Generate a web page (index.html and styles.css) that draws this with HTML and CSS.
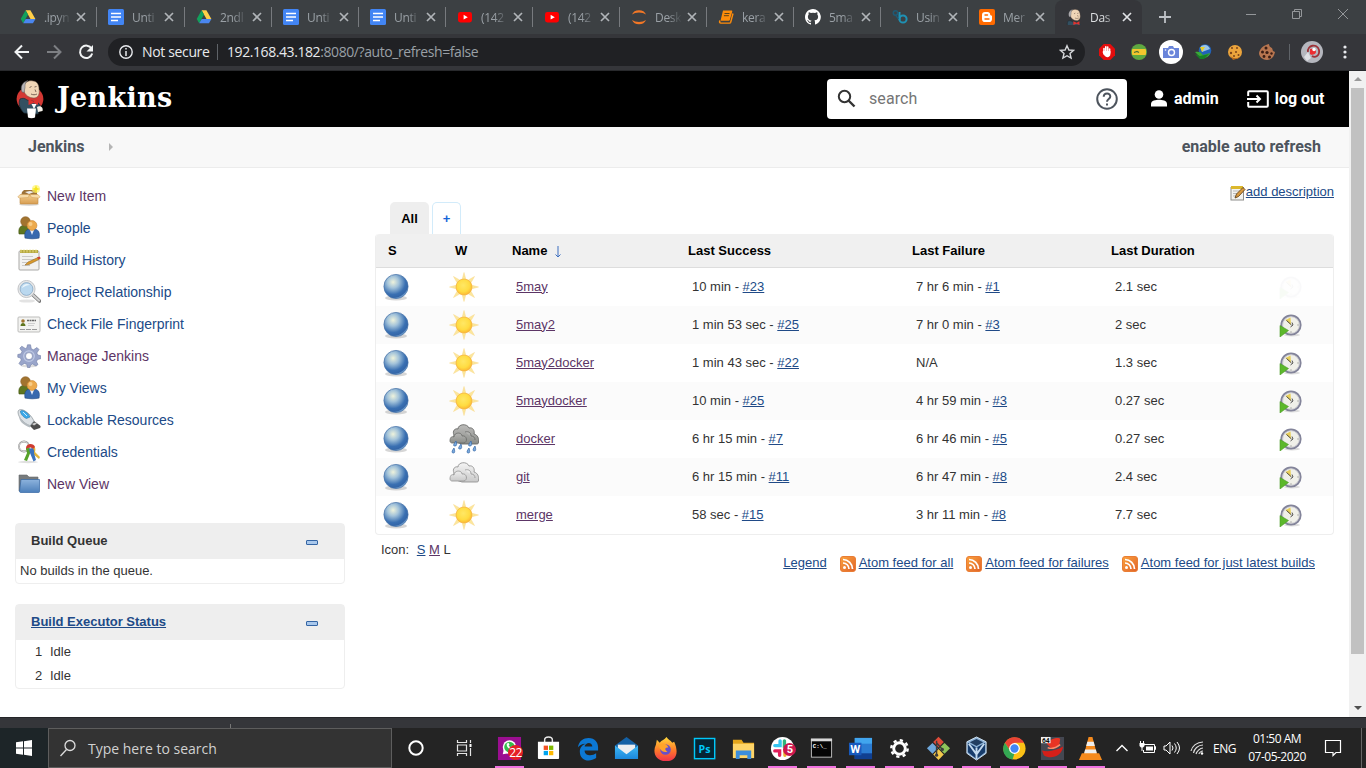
FILE: index.html
```html
<!DOCTYPE html>
<html lang="en">
<head>
<meta charset="utf-8">
<title>Dashboard [Jenkins]</title>
<link rel="stylesheet" href="styles.css">
</head>
<body>
<svg class="sprite" width="0" height="0" aria-hidden="true">
  <defs>
    <radialGradient id="ballFill" cx=".38" cy=".32" r=".68"><stop offset="0" stop-color="#eff3dc"/><stop offset=".35" stop-color="#a3c3da"/><stop offset=".75" stop-color="#3a70b2"/><stop offset=".93" stop-color="#3466a8"/><stop offset="1" stop-color="#6d9bcb"/></radialGradient>
    <radialGradient id="sunFill" cx=".45" cy=".4" r=".65"><stop offset="0" stop-color="#ffe765"/><stop offset=".6" stop-color="#ffdc42"/><stop offset="1" stop-color="#fbb02f"/></radialGradient>
    <linearGradient id="darkCloud" x2="0" y2="1"><stop offset="0" stop-color="#bcbcba"/><stop offset="1" stop-color="#8b8d89"/></linearGradient>
    <linearGradient id="lightCloud" x2="0" y2="1"><stop offset="0" stop-color="#f4f4f4"/><stop offset="1" stop-color="#c9c9c9"/></linearGradient>
    <linearGradient id="rssFill" x2="1" y2="1"><stop offset="0" stop-color="#fba33c"/><stop offset="1" stop-color="#e0622a"/></linearGradient>
    <linearGradient id="folderFill" x2="0" y2="1"><stop offset="0" stop-color="#8db3dd"/><stop offset="1" stop-color="#4c7fba"/></linearGradient>
    <linearGradient id="boxFill" x2="0" y2="1"><stop offset="0" stop-color="#f3cd8c"/><stop offset="1" stop-color="#d79d52"/></linearGradient>
    <linearGradient id="mailFill" x2="0" y2="1"><stop offset="0" stop-color="#3fb8f4"/><stop offset="1" stop-color="#1b87dc"/></linearGradient>
    <linearGradient id="foxFill" x2="0" y2="1"><stop offset="0" stop-color="#ffd93b"/><stop offset=".55" stop-color="#ff7a2a"/><stop offset="1" stop-color="#f0324c"/></linearGradient>
  </defs>
  <symbol id="close" viewBox="0 0 10 10"><path d="M1 1l8 8M9 1l-8 8" stroke="currentColor" stroke-width="1.7" fill="none"/></symbol>
  <symbol id="drive" viewBox="0 0 16 16"><path d="M5.6 1.2h4.8l5 8.8h-4.9z" fill="#ffcf48"/><path d="M5.6 1.2L8 5.5 3.2 14.3.7 10z" fill="#12a05c"/><path d="M5.7 10h9.8l-2.6 4.3H3.2z" fill="#4a86ef"/></symbol>
  <symbol id="docs" viewBox="0 0 16 16"><rect width="16" height="16" rx="1.5" fill="#4285f4"/><path d="M3 4.5h10M3 8h10M3 11.5h7" stroke="#fff" stroke-width="1.7"/></symbol>
  <symbol id="youtube" viewBox="0 0 16 16"><rect x="1" y="3" width="14" height="10.4" rx="2.4" fill="#f00"/><path d="M6.6 5.8l4.2 2.4-4.2 2.4z" fill="#fff"/></symbol>
  <symbol id="jupyter" viewBox="0 0 16 16"><path d="M1 5.4a7.4 6.3 0 0 1 14 0 9 5.3 0 0 0-14 0zM1 11a7.4 6.3 0 0 0 14 0 9 5.3 0 0 1-14 0z" fill="#f37726"/></symbol>
  <symbol id="book" viewBox="0 0 16 16"><path d="M5 1.500h8.200c1 0 1.300.5 1 1.300l-2.300 8c-.2.7-.6 1-1.300 1H2.500z" fill="#ff8c0a"/><path d="M15 4.500l-2.300 8.700c-.2.6-.5.900-1.200.9H3c-1.500 0-2-1.500-.8-2.500" fill="none" stroke="#ff8c0a" stroke-width="1.400"/><path d="M6.500 4.500h5M5.900 6.700h5" stroke="#5e4319"/></symbol>
  <symbol id="github" viewBox="0 0 16 16"><path fill="#fff" d="M8 0C3.600 0 0 3.600 0 8c0 3.500 2.300 6.500 5.500 7.600.4.100.5-.2.5-.4v-1.400c-2.200.5-2.700-1-2.700-1-.4-.9-.9-1.200-.9-1.200-.7-.5.1-.5.1-.5.8.1 1.200.8 1.200.8.7 1.300 1.900.9 2.300.7.1-.5.3-.9.5-1.100-1.800-.2-3.600-.9-3.600-4 0-.9.3-1.600.8-2.100-.1-.2-.4-1 .1-2.100 0 0 .7-.2 2.200.8a7.500 7.500 0 0 1 4 0c1.500-1 2.200-.8 2.200-.8.4 1.100.2 1.900.1 2.100.5.6.8 1.300.8 2.100 0 3.100-1.900 3.700-3.700 3.900.3.3.6.8.6 1.500v2.200c0 .2.1.5.6.4A8 8 0 0 0 8 0z"/></symbol>
  <symbol id="biglobe" viewBox="0 0 16 16"><g fill="none" stroke="#1e91b4" stroke-width="2"><circle cx="11" cy="10" r="3.600"/><path d="M7.500 11V3"/></g><circle cx="3.500" cy="4" r="2.200" fill="none" stroke="#1f5a75" stroke-width="1.500"/><path d="M3.500 6l3 4" stroke="#1f5a75" stroke-width="1.300"/></symbol>
  <symbol id="blogger" viewBox="0 0 16 16"><rect width="16" height="16" rx="2" fill="#ff6a00"/><path d="M6 3h2.600c1.500 0 2.600 1.200 2.600 2.600 0 .8.4.9 1.100.9.5 0 .7.3.7.8v2.600A3.100 3.100 0 0 1 9.900 13H6.100A3.100 3.100 0 0 1 3 9.900V6a3 3 0 0 1 3-3z" fill="#fff"/><path d="M6 6h2.500M6 10h4" stroke="#ff6a00" stroke-width="1.400" stroke-linecap="round"/></symbol>
  <symbol id="bust" viewBox="0 0 30 40">
    <path d="M5 20c2-1 5-1 7 1l9 2c3 1 5 3 4 6l-2 6-14-1C5 30 3 25 5 20z" fill="#335061" stroke="#1b2b34" stroke-width=".7"/>
    <path d="M8 9C9 3 14 1 18 2c4 0 6 4 6 8 1 5-1 9-5 9-5 0-9-3-10-7z" fill="#f0d6b7" stroke="#6b5648" stroke-width=".5"/>
    <path d="M7 13C5 8 7 3 13 1.500c-3 2-3 4-3 7l-1 5z" fill="#b4b2b6" stroke="#555" stroke-width=".5"/>
    <path d="M14.500 8.500l2-1m3 .5l2-.5m-1.500 3l1 2.500m-5 2c2 1 4 1 6 0" stroke="#5d483d" stroke-width=".8" fill="none"/>
    <path d="M13.500 20l5 2.500 4.500-2.500v6l-4.500-2-5 2z" fill="#e0332f"/>
  </symbol>
  <symbol id="butler" viewBox="0 0 30 40">
    <ellipse cx="15" cy="20" rx="13.400" ry="12.300" fill="#d33833"/>
    <use href="#bust" width="30" height="40"/>
    <path d="M16.500 25l2.500 5 2.500-5z" fill="#fff"/><path d="M12 29.500h9l-1 9c-2 1-5 1-7 0z" fill="#fff"/><path d="M22 28c3-2 6.500 0 5.500 4l-4.500 1z" fill="#f5f1e8"/>
  </symbol>
  <symbol id="person" viewBox="0 0 18 17"><circle cx="9" cy="4.500" r="4.300" fill="#fff"/><path d="M1 16.500v-2.600C1 10.500 6 9.800 9 9.800s8 .7 8 4.100v2.600z" fill="#fff"/></symbol>
  <symbol id="logout" viewBox="0 0 22 18"><path d="M1.200 6V2.200c0-.6.4-1 1-1h17.600c.6 0 1 .4 1 1v13.600c0 .6-.4 1-1 1H2.200c-.6 0-1-.4-1-1V12M0 9h13M9.500 5.500L13 9l-3.500 3.500" fill="none" stroke="#fff" stroke-width="2"/></symbol>
  <symbol id="newitem" viewBox="0 0 24 24"><ellipse cx="12" cy="20.500" rx="10" ry="1.500" fill="#ddd"/><path d="M5 8l2-2h11l2 2v4H4z" fill="#9c7238"/><path d="M8 8l5-1 4 1-5 2z" fill="#eee"/><path d="M3 11h18v8c0 1-.5 1-1 1H4c-1 0-1-.5-1-1z" fill="url(#boxFill)" stroke="#c08c45" stroke-width=".6"/><path d="M3 10.500L.8 13l1.500 1 9-.5 1-3zM21 10.500l2.200 2.500-1.500 1-7-.5-2-3z" fill="#f7dcaa" stroke="#cf9d57" stroke-width=".5"/><circle cx="19" cy="5" r="4" fill="#fff46b" opacity=".7"/><path d="M19 1l1 3 3 1-3 1-1 3-1-3-3-1 3-1z" fill="#f6e51c"/></symbol>
  <symbol id="people" viewBox="0 0 24 24"><ellipse cx="15" cy="22" rx="8" ry="1.200" fill="#ddd"/><path d="M2 18c-1-7 2-8 5-9h3c4 1 4 3 4 9z" fill="#5f7620" stroke="#415410" stroke-width=".6"/><circle cx="8.500" cy="5.500" r="4.800" fill="#a2742f" stroke="#8a602a" stroke-width=".6"/><path d="M8 22c-1-6 1-8 4-9h6c4 1 5 4 4 9-4 1-9 1-14 0z" fill="#3869ae" stroke="#204a87" stroke-width=".6"/><path d="M13 14l2 5 2-5z" fill="#e7eefb"/><circle cx="15" cy="9.500" r="4.900" fill="#edaa4d" stroke="#c98432" stroke-width=".6"/><circle cx="13.500" cy="8" r="2" fill="#f8cc87"/></symbol>
  <symbol id="notepad" viewBox="0 0 24 24"><rect x="2" y="3" width="20" height="19" rx="1" fill="#f2f2f0" stroke="#aaa9a7"/><rect x="3" y="2" width="18" height="3" fill="#b5a83f"/><path d="M4 1.500v3M7 1.500v3M10 1.500v3M13 1.500v3M16 1.500v3M19 1.500v3" stroke="#e6d983"/><path d="M5 8.500h11M5 11.500h12M5 14.500h5M5 17.500h8" stroke="#c9c9c7"/><path d="M8 17l3-3 10-4.500 1 2-10 5z" fill="#d99a2b" stroke="#83591a" stroke-width=".5"/><path d="M20 9.500l2.500-1 1.300 1.800-2 1.200z" fill="#cf4033"/></symbol>
  <symbol id="pencilnote" viewBox="0 0 16 16"><rect x="1" y="2.500" width="12.500" height="12.500" fill="#f3f3f0" stroke="#8e8e8b"/><path d="M1 1h12v3H1z" fill="#dcb82c"/><path d="M3 6h7M3 8.500h4M3 11h3" stroke="#bbb"/><path d="M5 13l1.500-4L13 2.500l2 2-6.500 7z" fill="#d9993e" stroke="#65451c" stroke-width=".9"/></symbol>
  <symbol id="magnify" viewBox="0 0 24 24"><ellipse cx="10" cy="21" rx="8" ry="1.600" fill="#e3e3e3"/><path d="M15 14l7.500 7" stroke="#777" stroke-width="3.600" stroke-linecap="round"/><path d="M15 14l7 6.500" stroke="#d0d0d0" stroke-width="2.200" stroke-linecap="round"/><circle cx="9.500" cy="9" r="7.500" fill="#bad8ef" stroke="#e8e8e8" stroke-width="2.200"/><circle cx="9.500" cy="9" r="8.600" fill="none" stroke="#a4a7ad" stroke-width=".6"/><circle cx="9.500" cy="9" r="6.400" fill="none" stroke="#7fa1be" stroke-width=".7"/><path d="M5 8c1-4 5-5 8-3-3 0-5 1-8 3z" fill="#eaf5fc"/></symbol>
  <symbol id="idcard" viewBox="0 0 24 24"><rect x="1" y="5" width="22" height="15" rx="1" fill="#f3f3f1" stroke="#bdbdbb"/><circle cx="6" cy="9" r="1.800" fill="#a2742f"/><path d="M3.500 14c0-4 5-4 5 0z" fill="#5f7620"/><path d="M10 8.500h9" stroke="#666" stroke-width="1.400" stroke-dasharray="2 .5"/><path d="M11 11.500h7M11 13.500h6" stroke="#d0d0d0"/><path d="M3 17.500h18" stroke="#999" stroke-dasharray="5 1"/></symbol>
  <symbol id="gear" viewBox="0 0 24 24"><ellipse cx="12" cy="22" rx="8" ry="1.300" fill="#ddd"/><path fill-rule="evenodd" d="M10.500.8h3l.8 4 2.200 1 3.500-2.300 2 2-2.200 3.500 1 2 3 .7v3l-3.300.8-1 2.300L21 20.500 19 22l-3.500-2-2 1-.5 2.500h-2.500l-.8-3.200-2.300-.8L4 21.500 2 19.500l2.300-3.500-.8-2-2.700-.8v-2.700L4 9.800l1-2.300L2.800 4.200l2-2L8.300 4.500l1.500-.8zM12 8.600a3.500 3.500 0 1 0 0 7 3.500 3.500 0 0 0 0-7z" fill="#99a5ca" stroke="#717da6" stroke-width=".6"/><circle cx="12" cy="12.100" r="5.300" fill="none" stroke="#bfc9e4" stroke-width="1.200"/></symbol>
  <symbol id="usb" viewBox="0 0 24 24"><path d="M12 17l5-4 6 4.500c1 .8.500 1.800 0 2.500l-6 2z" fill="#4d4d4d"/><path d="M15 16l3-1.500 2 1-3 2z" fill="#ccc"/><path d="M1 4c0-3 4-3 7-1 4 2 7 6 9 10l-4 5C8 16 1 10 1 4z" fill="#dce1e5" stroke="#8b9499" stroke-width=".7"/><path d="M3.500 3c2-2 8 2 9.500 6l-3.500 1.500C6.500 9.500 3 5.500 3.500 3z" fill="#3ba8e8" stroke="#156da5" stroke-width=".5"/><path d="M6 4l4 4" stroke="#c5eaff"/><path d="M2 8c3 5 7 8 11 9v2.500C6 17 2 13 2 8z" fill="#b4bbc0"/></symbol>
  <symbol id="keys" viewBox="0 0 24 24"><ellipse cx="11" cy="22" rx="10" ry="1.200" fill="#e0e0e0"/><circle cx="7" cy="6.500" r="5" fill="none" stroke="#8d8d8d" stroke-width="1.800"/><circle cx="7" cy="6.500" r="5" fill="none" stroke="#ededed" stroke-width=".8"/><path d="M14 6c4-1 5 3 4 6l5 5-1 2-6-5z" fill="#e2b53b"/><path d="M9 8c0-5 8-5 9-1l-2 2c-3-3-5-1-7 1z" fill="#cf3c31"/><path d="M9 9c2-2 5-1 5 2l-4 10-3-1 3-7z" fill="#56a129"/><path d="M12 9c3-2 6 0 5 4l2 7-2.500 1.500L13 13z" fill="#3c73bd"/></symbol>
  <symbol id="folder" viewBox="0 0 24 24"><path d="M2 3h8l2 2h9v14H2z" fill="#777b7d" stroke="#66696b" stroke-width=".6"/><path d="M4 7.500h18.500v12c0 .6-.4 1-1 1H4c-1 0-1.500-.5-1.500-1z" fill="url(#folderFill)" stroke="#3465a4" stroke-width=".7"/></symbol>
  <symbol id="ball" viewBox="0 0 30 30"><ellipse cx="15" cy="26" rx="11" ry="2.600" fill="#777" opacity=".3"/><circle cx="15" cy="14.500" r="12.100" fill="url(#ballFill)" stroke="#4470a6" stroke-width=".7"/></symbol>
  <symbol id="sun" viewBox="0 0 30 30"><path d="M15 .5l2 7.500h-4zM15 29.500l-2-7.500h4zM.5 15L8 13v4zM29.500 15L22 17v-4zM4.500 4.500l7 4-3 3zM25.500 25.500l-7-4 3-3zM25.500 4.500l-4 7-3-3zM4.500 25.500l4-7 3 3z" fill="#fce79c" stroke="#f8d98a" stroke-width=".5"/><circle cx="15" cy="15" r="8" fill="url(#sunFill)" stroke="#f4b041" stroke-width=".7"/></symbol>
  <symbol id="cloud" viewBox="0 0 30 30"><path d="M5 12C3 8 6 5 9 6c0-5 9-6 11-1 4-1 6 3 5 6 4 1 5 5 4.500 8 0 2-1 2-2 2H13l-9-3z" stroke-width=".9"/><path d="M1 18c0-4 2-5 4-4 0-5 8-5 8-1 5-1 6 6 2 7H3c-1 0-2-1-2-2zM16 9c4-1 6 1 6 4 3 0 4 2 4 4" stroke-width=".8"/></symbol>
  <symbol id="rain" viewBox="0 0 30 30"><g fill="url(#darkCloud)" stroke="#686967"><use href="#cloud" x="0" y="-1" width="30" height="30"/></g><g fill="#78aade" stroke="#3767a6" stroke-width=".7"><path d="M7 17c-3 4-3 5-1 5s2-2 1-5zM12 20c-3 4-3 5-1 5s2-2 1-5zM22 17c-3 4-3 5-1 5s2-2 1-5zM5 24c-3 4-2 5-.5 5S6 27 5 24zM20 24c-3 4-2 5-.5 5s1.500-2 .5-5zM26 22c-3 4-2 5-.5 5s1.500-2 .5-5z"/></g></symbol>
  <symbol id="overcast" viewBox="0 0 30 30"><g fill="url(#lightCloud)" stroke="#929292"><use href="#cloud" x="0" y="-1" width="30" height="30"/></g></symbol>
  <symbol id="clock" viewBox="0 0 24 24"><ellipse cx="14" cy="22" rx="8" ry="1.500" fill="#ddd"/><circle cx="13" cy="12" r="9.600" fill="#f0f0e9" stroke="#83849a" stroke-width="2"/><circle cx="13" cy="12" r="8.300" fill="none" stroke="#c9c9d0" stroke-width=".8"/><path d="M13 12L7.500 7l5-2.500z" fill="#e8cf59"/><path d="M8.500 7.500l5 4.500M14 9.500l1 2.500-2.500 2" fill="none" stroke="#444" stroke-width=".9"/><path d="M13 18.500v1M19.500 12h1" stroke="#777"/><path d="M2 12.500l8.500 5L2 24z" fill="#5cb82b" stroke="#4c9a26" stroke-width=".6"/></symbol>
  <symbol id="rss" viewBox="0 0 16 16"><rect x=".5" y=".5" width="15" height="15" rx="2.500" fill="url(#rssFill)" stroke="#e97d35"/><circle cx="4.500" cy="11.500" r="1.500" fill="#fff"/><path d="M3 7a6 6 0 0 1 6 6M3 3.500A9.500 9.500 0 0 1 12.500 13" fill="none" stroke="#fff" stroke-width="1.700"/></symbol>
</svg>

<div class="tabstrip">
  <div class="tab wide"><svg class="favicon"><use href="#drive"/></svg><span class="tab-title">.ipyn</span><svg class="tab-close"><use href="#close"/></svg></div>
  <div class="tab wide"><svg class="favicon"><use href="#docs"/></svg><span class="tab-title">Unti</span><svg class="tab-close"><use href="#close"/></svg></div>
  <div class="tab"><svg class="favicon"><use href="#drive"/></svg><span class="tab-title">2ndl</span><svg class="tab-close"><use href="#close"/></svg></div>
  <div class="tab"><svg class="favicon"><use href="#docs"/></svg><span class="tab-title">Unti</span><svg class="tab-close"><use href="#close"/></svg></div>
  <div class="tab"><svg class="favicon"><use href="#docs"/></svg><span class="tab-title">Unti</span><svg class="tab-close"><use href="#close"/></svg></div>
  <div class="tab"><svg class="favicon"><use href="#youtube"/></svg><span class="tab-title">(142</span><svg class="tab-close"><use href="#close"/></svg></div>
  <div class="tab"><svg class="favicon"><use href="#youtube"/></svg><span class="tab-title">(142</span><svg class="tab-close"><use href="#close"/></svg></div>
  <div class="tab"><svg class="favicon"><use href="#jupyter"/></svg><span class="tab-title">Desk</span><svg class="tab-close"><use href="#close"/></svg></div>
  <div class="tab"><svg class="favicon"><use href="#book"/></svg><span class="tab-title">kera</span><svg class="tab-close"><use href="#close"/></svg></div>
  <div class="tab"><svg class="favicon"><use href="#github"/></svg><span class="tab-title">5ma</span><svg class="tab-close"><use href="#close"/></svg></div>
  <div class="tab"><svg class="favicon"><use href="#biglobe"/></svg><span class="tab-title">Usin</span><svg class="tab-close"><use href="#close"/></svg></div>
  <div class="tab before-active"><svg class="favicon"><use href="#blogger"/></svg><span class="tab-title">Mer</span><svg class="tab-close"><use href="#close"/></svg></div>
  <div class="tab active"><svg class="favicon" viewBox="2 1 25 25"><use href="#bust" width="30" height="40"/></svg><span class="tab-title">Das</span><svg class="tab-close"><use href="#close"/></svg></div>
  <svg class="new-tab" viewBox="0 0 12 12"><path d="M6 0v12M0 6h12" stroke="#bdc1c6" stroke-width="1.800"/></svg>
  <div class="window-buttons">
    <svg width="12" height="12"><path d="M1 6.500h10" stroke="#94979a"/></svg>
    <svg width="12" height="12"><path d="M1.500 3.500h7v7h-7zM3.500 3.500v-2h7v7h-2" stroke="#94979a" fill="none"/></svg>
    <svg width="12" height="12"><path d="M1 1l10 10M11 1L1 11" stroke="#94979a" fill="none"/></svg>
  </div>
</div>

<div class="toolbar">
  <svg class="nav" viewBox="0 0 16 16"><path d="M15 8H2M8 1.500L1.500 8 8 14.500" fill="none" stroke="#f1f3f4" stroke-width="2"/></svg>
  <svg class="nav" viewBox="0 0 16 16"><path d="M1 8h13M8 1.500L14.500 8 8 14.500" fill="none" stroke="#7d7f83" stroke-width="2"/></svg>
  <svg class="nav" viewBox="0 0 16 16"><path d="M13.600 4.700A6.200 6.200 0 1 0 14.200 9.500" fill="none" stroke="#f1f3f4" stroke-width="2"/><path d="M15 1v6.500H8.500z" fill="#f1f3f4"/></svg>
  <div class="omnibox">
    <svg class="info" viewBox="0 0 14 14"><circle cx="7" cy="7" r="6.200" fill="none" stroke="#e8eaed" stroke-width="1.400"/><path d="M7 6v5M7 3v1.600" stroke="#e8eaed" stroke-width="1.500"/></svg>
    <span class="not-secure">Not secure</span><i class="divider"></i>
    <span class="url"><b>192.168.43.182</b>:8080/?auto_refresh=false</span>
    <svg class="star" viewBox="0 0 16 16"><path d="M8 1.700l1.900 4.300 4.700.4-3.600 3.100 1.100 4.600L8 11.700l-4.100 2.400L5 9.500 1.400 6.400 6.100 6z" fill="none" stroke="#d5d7da" stroke-width="1.400"/></svg>
  </div>
  <div class="extensions">
    <svg viewBox="0 0 24 24"><path d="M8.700 4h6.600L20 8.700v6.600L15.300 20H8.700L4 15.300V8.700z" fill="#e40d0d"/><path d="M9 14V8.500M10.800 13V6.800M12.700 13V7M14.600 13V9" stroke="#fff" stroke-width="1.600" stroke-linecap="round"/><path d="M8.200 11h7.200v3c0 4-5 4-6.200 1L7.500 12z" fill="#fff"/></svg>
    <svg viewBox="0 0 24 24"><circle cx="12" cy="12" r="8" fill="#5fa840"/><rect x="5" y="9" width="14" height="6" rx="1" fill="#f3c62d"/><path d="M7 12.500l3-1 2 1" stroke="#4d7136" stroke-width="1.300" fill="none"/></svg>
    <svg viewBox="0 0 24 24"><circle cx="12" cy="12" r="12" fill="#fff"/><path d="M4 8h5l1-2h4l1 2h5v10H4z" fill="#6a85da"/><circle cx="12.500" cy="12.500" r="3" fill="none" stroke="#fff" stroke-width="1.400"/><circle cx="6.500" cy="10" r=".8" fill="#fff"/></svg>
    <svg viewBox="0 0 24 24"><circle cx="14" cy="10.500" r="6.300" fill="#2262b8"/><path d="M10 6c5-2 7-1 9 3l-8 3z" fill="#9bc5e7"/><path d="M4 12c4-1 6 0 8 3l7-2c-1 5-8 7-11 3z" fill="#39a935"/><path d="M9 7l5 0-3 5z" fill="#e6cd29"/><path d="M4 14l5 2 9-2-5 5H9z" fill="#178025"/></svg>
    <svg viewBox="0 0 24 24"><circle cx="12" cy="12" r="7" fill="#eca43c"/><path d="M6 14c3 5 9 6 12 1l-2 3-6 2z" fill="#b76719"/><g fill="#7d451a"><circle cx="9" cy="8" r="1"/><circle cx="14" cy="8" r="1"/><circle cx="8" cy="13" r="1.200"/><circle cx="13" cy="12" r="1"/><circle cx="15.500" cy="15" r="1"/><circle cx="11" cy="16" r="1"/></g></svg>
    <svg viewBox="0 0 24 24"><path d="M14 4c0 2 1 3 3 4l1 3 2 1c-1 5-4 8-8 8s-8-3-8-7c1-5 5-8 10-9z" fill="#b87650"/><g fill="#3b1e15"><circle cx="11" cy="8" r="1.500"/><circle cx="7.500" cy="12" r="1.500"/><circle cx="12" cy="12.500" r="1.600"/><circle cx="9" cy="16.500" r="1.400"/><circle cx="14.500" cy="17" r="1.500"/><circle cx="16.500" cy="13.500" r="1.200"/></g></svg>
  </div>
  <i class="divider"></i>
  <svg class="avatar" viewBox="0 0 22 22"><circle cx="11" cy="11" r="11" fill="#b5b7be"/><path d="M7 11c-1-7 9-9 11-2 1 6-4 8-7 6" fill="none" stroke="#9e3238" stroke-width="1.800"/><path d="M9 8c4-1 6 1 6 3s-4 4-6 2z" fill="#ed2d31"/><circle cx="13" cy="8.500" r="1.700" fill="#fff"/><path d="M3 16l4-5 3 6-4 3z" fill="#dee0e4"/></svg>
  <svg class="kebab" viewBox="0 0 4 16"><g fill="#e8eaed"><circle cx="2" cy="3" r="1.600"/><circle cx="2" cy="8" r="1.600"/><circle cx="2" cy="13" r="1.600"/></g></svg>
</div>

<div class="viewport">
  <div class="page">
    <header class="header">
      <svg class="logo"><use href="#butler"/></svg><span class="brand">Jenkins</span>
      <div class="search">
        <svg width="20" height="20" viewBox="0 0 20 20"><circle cx="7.500" cy="7.500" r="5.700" fill="none" stroke="#333" stroke-width="2"/><path d="M11.500 11.500l6 6" stroke="#333" stroke-width="2.400"/></svg>
        <span>search</span>
        <svg class="help" viewBox="0 0 20 20"><circle cx="10" cy="10" r="8.900" fill="none" stroke="#4d545d" stroke-width="1.800"/><path d="M7 8c0-4 6-4 6-.3C13 10 10 10 10 12.500M10 14v2" fill="none" stroke="#4d545d" stroke-width="1.800"/></svg>
      </div>
      <a class="user"><svg width="18" height="17"><use href="#person"/></svg>admin</a>
      <a class="logout"><svg width="22" height="18"><use href="#logout"/></svg>log out</a>
    </header>
    <nav class="breadcrumbs"><span>Jenkins</span><i></i><a>enable auto refresh</a></nav>
    <div class="content">
      <aside class="sidebar">
        <a class="task visited"><svg><use href="#newitem"/></svg>New Item</a>
        <a class="task"><svg><use href="#people"/></svg>People</a>
        <a class="task"><svg><use href="#notepad"/></svg>Build History</a>
        <a class="task"><svg><use href="#magnify"/></svg>Project Relationship</a>
        <a class="task"><svg><use href="#idcard"/></svg>Check File Fingerprint</a>
        <a class="task visited"><svg><use href="#gear"/></svg>Manage Jenkins</a>
        <a class="task"><svg><use href="#people"/></svg>My Views</a>
        <a class="task"><svg><use href="#usb"/></svg>Lockable Resources</a>
        <a class="task"><svg><use href="#keys"/></svg>Credentials</a>
        <a class="task visited"><svg><use href="#folder"/></svg>New View</a>
        <section class="pane queue"><h2>Build Queue<i class="collapse"></i></h2><p>No builds in the queue.</p></section>
        <section class="pane executors"><h2><a>Build Executor Status</a><i class="collapse"></i></h2><p><span>1</span>Idle</p><p><span>2</span>Idle</p></section>
      </aside>
      <main class="main">
        <div class="describe"><svg><use href="#pencilnote"/></svg><a>add description</a></div>
        <div class="views"><b>All</b><a>+</a></div>
        <div class="jobs">
          <div class="row head"><span>S</span><span>W</span><span>Name<svg class="arrow" viewBox="0 0 6 12"><path d="M3 0v11M.5 8.500L3 11l2.500-2.500" fill="none" stroke="#3d6fc0"/></svg></span><span>Last Success</span><span>Last Failure</span><span>Last Duration</span><span></span></div>
          <div class="row"><svg class="icon"><use href="#ball"/></svg><svg class="icon"><use href="#sun"/></svg><a class="visited">5may</a><span>10 min - <a>#23</a></span><span>7 hr 6 min - <a>#1</a></span><span>2.1 sec</span><svg class="build faded"><use href="#clock"/></svg></div>
          <div class="row"><svg class="icon"><use href="#ball"/></svg><svg class="icon"><use href="#sun"/></svg><a class="visited">5may2</a><span>1 min 53 sec - <a>#25</a></span><span>7 hr 0 min - <a>#3</a></span><span>2 sec</span><svg class="build"><use href="#clock"/></svg></div>
          <div class="row"><svg class="icon"><use href="#ball"/></svg><svg class="icon"><use href="#sun"/></svg><a class="visited">5may2docker</a><span>1 min 43 sec - <a>#22</a></span><span>N/A</span><span>1.3 sec</span><svg class="build"><use href="#clock"/></svg></div>
          <div class="row"><svg class="icon"><use href="#ball"/></svg><svg class="icon"><use href="#sun"/></svg><a class="visited">5maydocker</a><span>10 min - <a>#25</a></span><span>4 hr 59 min - <a>#3</a></span><span>0.27 sec</span><svg class="build"><use href="#clock"/></svg></div>
          <div class="row"><svg class="icon"><use href="#ball"/></svg><svg class="icon"><use href="#rain"/></svg><a class="visited">docker</a><span>6 hr 15 min - <a>#7</a></span><span>6 hr 46 min - <a>#5</a></span><span>0.27 sec</span><svg class="build"><use href="#clock"/></svg></div>
          <div class="row"><svg class="icon"><use href="#ball"/></svg><svg class="icon"><use href="#overcast"/></svg><a class="visited">git</a><span>6 hr 15 min - <a>#11</a></span><span>6 hr 47 min - <a>#8</a></span><span>2.4 sec</span><svg class="build"><use href="#clock"/></svg></div>
          <div class="row"><svg class="icon"><use href="#ball"/></svg><svg class="icon"><use href="#sun"/></svg><a class="visited">merge</a><span>58 sec - <a>#15</a></span><span>3 hr 11 min - <a>#8</a></span><span>7.7 sec</span><svg class="build"><use href="#clock"/></svg></div>
        </div>
        <div class="sizes">Icon: <a class="first">S</a> <a class="visited">M</a> L</div>
        <div class="feeds"><a>Legend</a><svg><use href="#rss"/></svg><a>Atom feed for all</a><svg><use href="#rss"/></svg><a>Atom feed for failures</a><svg><use href="#rss"/></svg><a>Atom feed for just latest builds</a></div>
      </main>
    </div>
  </div>
  <div class="scrollbar"><i class="up"></i><i class="thumb"></i><i class="down"></i></div>
</div>

<div class="strip"><i></i></div>
<footer class="taskbar">
  <div class="start"><svg width="16" height="16"><path d="M0 2.300L7 1.300V7.500H0zM8 1.200L16 0v7.500H8zM0 8.500h7v6.200L0 13.700zM8 8.500h8V16l-8-1.200z" fill="#fff"/></svg></div>
  <div class="type-search"><svg width="18" height="18"><circle cx="11" cy="6.500" r="5" fill="none" stroke="#ddd" stroke-width="1.300"/><path d="M7.500 10.500L1.500 17" stroke="#ddd" stroke-width="1.300"/></svg><span>Type here to search</span></div>
  <div class="sys"><svg width="18" height="18"><circle cx="9" cy="9" r="6.700" fill="none" stroke="#fff" stroke-width="2"/></svg></div>
  <div class="sys"><svg width="18" height="18"><path d="M2.500 1v2.500h9V1M2.500 6h9v6h-9zM2.500 17v-2.500h9V17M15.500 1v3M15.500 9v8" fill="none" stroke="#e5e5e5" stroke-width="1.200"/><path d="M14.500 5h2v3h-2z" fill="#fff"/></svg></div>
  <div class="apps">
    <div class="app running"><svg viewBox="0 0 26 26"><rect x="1" y="1" width="24" height="24" fill="#9b0e91"/><circle cx="13" cy="11.500" r="7" fill="#fff"/><path d="M6 19l1-5 5 4z" fill="#fff"/><circle cx="13" cy="11.500" r="5.500" fill="#35bd4e"/><path d="M10 8c0 4 3 6 6 6l1-2-2-1-1 1-2-2 1-1-1-2z" fill="#fff"/></svg><b class="count">22</b></div>
    <div class="app"><svg viewBox="0 0 26 26"><path d="M9 7V4c0-4 8-4 8 0v3" fill="none" stroke="#e8e8e8" stroke-width="1.500"/><path d="M2 6h22v17c0 .6-.5 1-1 1H3c-.6 0-1-.4-1-1z" fill="#fff"/><path d="M8 10h4.500v4.500H8z" fill="#f25022"/><path d="M13.500 10H18v4.500h-4.500z" fill="#7fba00"/><path d="M8 15.500h4.500V20H8z" fill="#00a4ef"/><path d="M13.500 15.500H18V20h-4.500z" fill="#ffb900"/></svg></div>
    <div class="app"><svg viewBox="0 0 26 26"><path d="M3 12C4 5 9 2 14 2c7 0 10 5 10 10v3H10c0 6 8 6 12 3v5C14 28 5 25 5 16c0-4 3-7 6-8-4 0-7 2-8 4zm7-1h8c0-5-7-5-8 0z" fill="#0c78d4"/></svg></div>
    <div class="app"><svg viewBox="0 0 26 26"><path d="M1 10L13 1l12 9v14H1z" fill="#1461a5"/><path d="M4 9h18v12H4z" fill="#eceef0"/><path d="M1 10l12 9 12-9v14H1z" fill="url(#mailFill)"/></svg></div>
    <div class="app"><svg viewBox="0 0 26 26"><path d="M3 9l1-5 3 3c2-3 5-3 7-6 2 3 4 3 6 6l2-1c8 18-5 21-9 20C3 26-1 17 3 9z" fill="url(#foxFill)"/><circle cx="13" cy="14" r="5.500" fill="#6650c9"/><path d="M6 9c5-3 9 0 10 3-4-1-4 3-1 4-4 2-9-2-9-7z" fill="#ffa42a"/></svg></div>
    <div class="app"><svg viewBox="0 0 26 26"><rect x="2.600" y="2.600" width="21" height="21" fill="#062534" stroke="#00c8fa" stroke-width="1.500"/><text x="13" y="17.500" class="ps">Ps</text></svg></div>
    <div class="app"><svg viewBox="0 0 26 26"><path d="M2 4h9l2 3h11v16H2z" fill="#e4a51a"/><path d="M2 8h22v15H2z" fill="#ffd568"/><path d="M5 15h16v9h-4v-4H9v4H5z" fill="#3c8edb"/></svg></div>
    <div class="app running"><svg viewBox="0 0 26 26"><circle cx="13" cy="13" r="12" fill="#fff"/><g stroke-width="3.500" stroke-linecap="round" fill="none"><path d="M10.500 5v5H5" stroke="#36c5f0"/><path d="M20 10.500h-5V5" stroke="#2eb67d"/><path d="M15.500 20v-5H20" stroke="#ecb22e"/><path d="M5 15.500h5V20" stroke="#e01e5a"/></g></svg><b class="count slack">5</b></div>
    <div class="app running"><svg viewBox="0 0 26 26"><rect x="2.500" y="3" width="21" height="19" fill="#050505" stroke="#bbb"/><path d="M2 3h22v2.500H2z" fill="#d8d8d8"/><text x="4" y="12" class="cmd">C:\_</text></svg></div>
    <div class="app running"><svg viewBox="0 0 26 26"><path d="M7 2h18v22H7z" fill="#2b7cd3"/><path d="M7 2h18v6H7z" fill="#41a5ee"/><path d="M7 18h18v6H7z" fill="#103f91"/><path d="M1 7h13v13H1z" fill="#185abd"/><text x="7.500" y="17.500" class="word">W</text></svg></div>
    <div class="app running"><svg viewBox="0 0 26 26"><circle cx="13" cy="13" r="6" fill="none" stroke="#fff" stroke-width="3"/><circle cx="13" cy="13" r="8.500" fill="none" stroke="#fff" stroke-width="2.600" stroke-dasharray="3.300 3.376"/></svg></div>
    <div class="app running narrow"><svg viewBox="0 0 26 26"><path d="M13 .8l5.500 5.500L13 12 7.500 6.300z" fill="#dd4b39"/><path d="M6.700 7.200l5.600 5.600-5.600 5.700L1 12.800z" fill="#6fa8dc"/><path d="M19.300 7.200l5.700 5.600-5.700 5.700-5.600-5.700z" fill="#8fc35a"/><path d="M13 13.500l5.500 5.700L13 25l-5.500-5.800z" fill="#f2c94c"/><path d="M11 5v15M11 7l6 7" stroke="#3c3c3c" stroke-width="1.500"/><circle cx="11" cy="20" r="1.700" fill="#3c3c3c"/><circle cx="17" cy="14" r="1.700" fill="#3c3c3c"/></svg></div>
    <div class="app running narrow"><svg viewBox="0 0 26 26"><path d="M13 1l10 5v12l-10 7-10-7V6z" fill="#8fb4d8" stroke="#d0e2f2"/><path d="M4 7l9 5 9-5v10l-9 7-9-7z" fill="#173c6b"/><path d="M13 3l7 3.500-7 4-7-4z" fill="#213e61"/><path d="M13 12v12M5 8l8 11 8-11" stroke="#c4dbef" stroke-width="2" fill="none"/></svg></div>
    <div class="app running narrow"><svg viewBox="0 0 26 26"><circle cx="13" cy="13" r="11.500" fill="#fbc116"/><path d="M3 7a11.500 11.500 0 0 1 20 0H13l-4 9z" fill="#ea4335"/><path d="M3 7l6 9 4 2-2 6.500C2 23-1 14 3 7z" fill="#34a853"/><circle cx="13" cy="13" r="5.600" fill="#fff"/><circle cx="13" cy="13" r="4.300" fill="#4285f4"/></svg></div>
    <div class="app running narrow"><svg viewBox="0 0 26 26"><path d="M1 1h24v24H1z" fill="#444751"/><path d="M7 8c4-6 13-7 14-5l-1 7-8 3z" fill="#e93424"/><path d="M2 15c7 2 15 0 22-4-1 10-13 14-20 9z" fill="#d51f19"/><path d="M8 12c4 2 9 0 13-3" stroke="#ff8a69" stroke-width="1.500" fill="none"/><path d="M1 1h10v6.500H1z" fill="#eee"/><text x="2" y="6.800" class="mini">64</text></svg></div>
    <div class="app running narrow"><svg viewBox="0 0 26 26"><path d="M4 18h18l3 7H1z" fill="#f58a1d"/><path d="M11 1h4l5 19c-3 2-11 2-14 0z" fill="#f58a1d"/><path d="M9.700 6h6.600l1.200 4.500h-9zM7.400 14h11.200l1 4H6.400z" fill="#eee"/></svg></div>
  </div>
  <div class="tray">
    <svg class="caret" width="14" height="10"><path d="M1.500 8L7 2.500 12.500 8" stroke="#fff" fill="none" stroke-width="1.400"/></svg>
    <svg class="battery" width="18" height="16"><path d="M5 4.500h10.500v8H4.500V10M15.500 6.500h1v3h-1" fill="none" stroke="#fff"/><path d="M7 6.500h7v4H7z" fill="#fff"/><path d="M1.500 1v2.500M4.500 1v2.500M3 7v4" stroke="#fff"/><path d="M.5 3h5v3l-1.500 1.500h-2L.5 6z" fill="#fff"/></svg>
    <svg class="volume" width="18" height="16"><path d="M1 6h2l4-4v12l-4-4H1zM9 5.500q2 2.500 0 5M11.500 3.500q3.500 4.500 0 9M14 2q5 6 0 12" fill="none" stroke="#fff"/></svg>
    <svg class="wifi" width="14" height="14"><path d="M1 10C2 5 7 1 13 1M3.500 12C4 8 8 4 13 4M6 13c1-3 4-6 7-6M9 13c0-1 2-3 4-3" fill="none" stroke="#ddd" stroke-width="1.200"/><circle cx="12" cy="12.500" r="1.200" fill="#fff"/></svg>
    <span class="lang">ENG</span>
    <div class="datetime"><span>01:50 AM</span><span>07-05-2020</span></div>
    <svg class="notice" width="18" height="18"><path d="M1.500 1.500h15v12H12l-3 3v-3H1.500z" fill="none" stroke="#fff" stroke-width="1.200"/></svg>
  </div>
</footer>
</body>
</html>
```
FILE: styles.css
```css
* { box-sizing: border-box; }
html, body { width: 1366px; height: 768px; margin: 0; overflow: hidden; }
body { display: flex; flex-direction: column; background: #35363a; font: 13px "Liberation Sans", Arial, sans-serif; color: #333; }
.sprite { position: absolute; }
svg { flex: none; display: block; }
i { font-style: normal; }

/* Browser tabs */
.tabstrip { height: 34px; flex: none; display: flex; align-items: center; padding-left: 9px; background: #3c4043; }
.tab { flex: none; width: 87px; height: 34px; display: flex; align-items: center; padding-left: 11px; position: relative; color: #9aa0a6; font: 12px "Open Sans", "Noto Sans", sans-serif; }
.tab.wide { width: 88px; }
.tab::after { content: ""; position: absolute; right: 0; top: 7px; width: 1px; height: 20px; background: #777a7e; }
.tab.active::after, .tab.before-active::after { display: none; }
.tab.active { background: #35363a; border-radius: 8px 8px 0 0; color: #dcdee1; }
.favicon { width: 16px; height: 16px; }
.tab-title { width: 27px; margin-left: 8px; white-space: nowrap; letter-spacing: -.3px; -webkit-mask-image: linear-gradient(90deg, #000 50%, transparent); mask-image: linear-gradient(90deg, #000 50%, transparent); }
.tab-close { width: 10px; height: 10px; margin-left: 5px; color: #b0b4b8; }
.active .tab-close { color: #e0e2e5; }
.new-tab { width: 12px; height: 12px; margin-left: 17px; }
.window-buttons { display: flex; gap: 34px; margin-left: 74px; height: 28px; align-items: center; align-self: flex-start; }

.toolbar { height: 37px; flex: none; display: flex; align-items: center; padding: 0 0 1px 14px; background: #35363a; border-bottom: 1px solid #28292c; }
.nav { width: 16px; height: 16px; margin-right: 16px; }
.omnibox { width: 977px; height: 28px; margin-left: -2px; padding-left: 11px; display: flex; align-items: center; background: #202124; border-radius: 14px; font: 14px "Open Sans", "Noto Sans", sans-serif; color: #9aa0a6; }
.info { width: 14px; height: 14px; margin-right: 9px; }
.not-secure { width: 67px; color: #e8eaed; letter-spacing: -.35px; white-space: nowrap; }
.omnibox .divider { margin: 0 9px 0 8px; }
.divider { width: 1px; height: 16px; background: #5f6368; }
.url { letter-spacing: -.42px; white-space: nowrap; }
.url b { color: #e8eaed; font-weight: 400; }
.star { width: 16px; height: 16px; margin-left: auto; margin-right: 10px; }
.extensions { display: flex; gap: 8px; margin: 0 10px; }
.extensions svg { width: 24px; height: 24px; }
.avatar { width: 22px; height: 22px; margin-left: 11px; }
.kebab { width: 4px; height: 16px; margin-left: 20px; }

/* Jenkins page */
.viewport { height: 646px; flex: none; display: flex; background: #fff; }
.page { width: 1349px; }
.header { height: 56px; display: flex; align-items: center; padding-left: 15px; background: #000; color: #fff; font: bold 16px Roboto, sans-serif; }
.logo { width: 30px; height: 40px; }
.brand { width: 120px; margin-left: 12px; padding-bottom: 3px; font: bold 27px "DejaVu Serif", serif; letter-spacing: .3px; }
.search { width: 300px; height: 40px; margin-left: 650px; padding: 0 9px 0 10px; display: flex; align-items: center; border-radius: 4px; background: #fff; color: #757575; font: 16px Roboto, sans-serif; }
.search span { flex: 1; margin-left: 12px; padding-bottom: 1px; letter-spacing: .1px; }
.help { width: 22px; height: 22px; }
.user, .logout { display: flex; align-items: center; white-space: nowrap; padding-bottom: 1px; }
.user { margin-left: 23px; gap: 6px; }
.logout { margin-left: 28px; gap: 6px; }
.breadcrumbs { height: 41px; display: flex; align-items: center; padding: 0 28px 1px; background: #f8f8f8; border-bottom: 1px solid #ececec; color: #4d545d; font: bold 16px Roboto, sans-serif; }
.breadcrumbs i { margin-left: 24px; border: 4px solid transparent; border-left-color: #b5b5b5; border-right: 0; }
.breadcrumbs a { margin-left: auto; }
.content { display: flex; }
a { color: #204a87; }
.header a, .breadcrumbs a { color: inherit; }
a.visited { color: #5c3566; }
.sidebar { width: 345px; padding: 12px 0 0 15px; }
.task { height: 32px; display: flex; align-items: center; gap: 6px; padding-left: 2px; font-size: 14px; }
.task svg { width: 24px; height: 24px; }
.pane { width: 330px; border: 1px solid #eee; border-radius: 4px; }
.queue { margin-top: 23px; height: 61px; }
.executors { margin-top: 20px; height: 85px; }
.pane h2 { height: 35px; margin: 0; padding: 0 26px 2px 15px; display: flex; align-items: center; justify-content: space-between; background: #eee; font-size: 13px; }
.pane a { text-decoration: underline; }
.collapse { width: 12px; height: 5px; margin-top: 3px; border: 1px solid #3465a4; border-radius: 1px; background: #a9c8ec; }
.pane p { height: 24px; margin: 0; line-height: 24px; padding-left: 4px; }
.executors p { padding-left: 19px; }
.pane p span { display: inline-block; width: 15px; }

.main { width: 959px; margin-left: 30px; padding-top: 17px; }
.describe { height: 17px; display: flex; justify-content: flex-end; }
.describe svg { width: 16px; height: 16px; }
.describe a, .jobs a, .sizes a, .feeds a { text-decoration: underline; }
.views { display: flex; gap: 3px; height: 32px; padding-left: 15px; }
.describe a { line-height: 13px; }
.views b, .views a { display: flex; justify-content: center; align-items: center; border-radius: 5px 5px 0 0; font-weight: bold; }
.views b { width: 39px; background: #eee; color: #000; }
.views a { width: 29px; border: 1px solid #d2ebfa; border-bottom: 0; color: #1565d8; }
.jobs { border: 1px solid #eee; border-top: 0; border-radius: 4px; }
.row { height: 38px; padding-bottom: 1px; display: grid; grid-template-columns: 67px 57px 176px 224px 199px 168px 1fr; align-items: center; }
.row:nth-child(odd) { background: #fbfbfb; }
.row > span, .row > a { padding-left: 16px; }
.row > a, .row > span { padding-bottom: 1px; }
.row.head { height: 34px; padding-bottom: 0; background: #f0f0f0; border-bottom: 1px solid #ddd; border-radius: 4px 4px 0 0; color: #000; font-weight: bold; }
.row.head > span { padding-left: 12px; padding-bottom: 0; }
.icon { width: 30px; height: 30px; margin-left: 6px; }
.icon:first-child { margin-left: 5px; }
.arrow { display: inline-block; width: 6px; height: 12px; margin-left: 8px; vertical-align: -3px; }
.build { width: 24px; height: 24px; margin-left: 11px; }
.faded { opacity: .04; }
.sizes { margin: 7px 0 0 6px; line-height: 16px; }
.sizes .first { margin-left: 4px; }
.feeds { display: flex; justify-content: flex-end; align-items: center; padding-right: 19px; margin-top: -5px; }
.feeds svg { width: 16px; height: 16px; margin: 3px 3px 0 13px; }

.scrollbar { width: 17px; display: flex; flex-direction: column; align-items: center; background: #f1f1f1; }
.scrollbar .up { margin-top: 6px; border: 4px solid transparent; border-bottom-color: #999; border-top: 0; }
.scrollbar .thumb { width: 13px; height: 566px; margin-top: 7px; background: #c1c1c1; }
.scrollbar .down { margin-top: 52px; border: 4px solid transparent; border-top-color: #505050; border-bottom: 0; }

/* Desktop taskbar */
.strip { height: 11px; flex: none; border-top: 1px solid #242528; background: #35363a; display: flex; align-items: flex-end; }
.strip i { width: 1px; height: 4px; margin-left: 230px; background: #777; }
.taskbar { height: 40px; flex: none; display: flex; background: #242424; color: #fff; font-family: "Open Sans", "Noto Sans", sans-serif; }
.start { width: 48px; display: flex; align-items: center; justify-content: center; background: #1d2528; }
.type-search { width: 344px; display: flex; align-items: center; gap: 11px; padding-left: 10px; border: 1px solid #5d5d5d; background: #333; color: #d1d1d1; font-size: 14px; letter-spacing: 0; }
.sys { width: 48px; display: flex; align-items: center; justify-content: center; }
.apps { display: flex; margin-left: 2px; }
.app { width: 39px; position: relative; display: flex; align-items: center; justify-content: center; }
.app.narrow { width: 38px; }
.app svg { width: 25px; height: 25px; }
.running::after { content: ""; position: absolute; bottom: 0; left: 5px; width: 29px; height: 2px; background: #f072e0; }
.count { position: absolute; left: 18px; top: 17px; width: 15px; height: 15px; border-radius: 50%; background: #e51f25; font: 12px/15px "Open Sans", sans-serif; text-align: center; letter-spacing: -.6px; }
.count.slack { left: 20px; top: 15px; width: 13px; height: 13px; background: #cc164d; font: bold 11px/13px Roboto, sans-serif; }
.ps { font: bold 11px "Open Sans", sans-serif; fill: #00c8fa; text-anchor: middle; }
.cmd { font: bold 6px "Liberation Mono", monospace; fill: #fff; }
.word { font: bold 12px Roboto, sans-serif; fill: #fff; text-anchor: middle; }
.mini { font: bold 7px Roboto, sans-serif; fill: #111; }
.tray { display: flex; align-items: center; flex: 1; margin-left: 6px; font-size: 12px; }
.battery { margin-left: 10px; }
.volume { margin-left: 6px; }
.wifi { margin-left: 9px; }
.lang { margin-left: 9px; width: 25px; letter-spacing: -.5px; }
.datetime { width: 78px; display: flex; flex-direction: column; align-items: center; line-height: 18px; letter-spacing: -.5px; }
.notice { margin-left: 8px; }
.tray::after { content: ""; width: 1px; height: 40px; margin-left: 19px; background: #666; }
```
